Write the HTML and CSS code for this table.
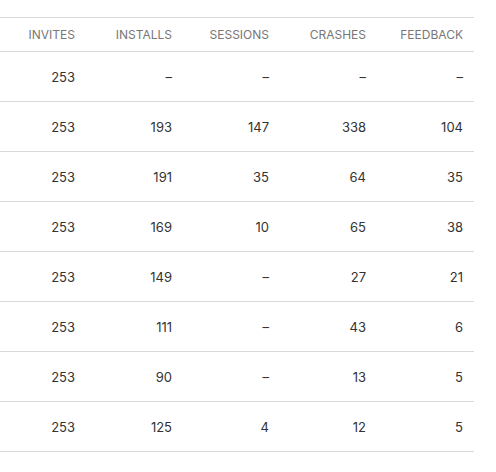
FILE: index.html
```html
<!DOCTYPE html>
<html>
<head>
<meta charset="utf-8">
<link rel="stylesheet" href="styles.css">
</head>
<body>
<div class="wrap">
<table class="stats">
<thead>
<tr><th class="c1">Invites</th><th>Installs</th><th>Sessions</th><th>Crashes</th><th>Feedback</th></tr>
</thead>
<tbody>
<tr><td>253</td><td>–</td><td>–</td><td>–</td><td>–</td></tr>
<tr><td>253</td><td>193</td><td>147</td><td>338</td><td>104</td></tr>
<tr><td>253</td><td>191</td><td>35</td><td>64</td><td>35</td></tr>
<tr><td>253</td><td>169</td><td>10</td><td>65</td><td>38</td></tr>
<tr><td>253</td><td>149</td><td>–</td><td>27</td><td>21</td></tr>
<tr><td>253</td><td>111</td><td>–</td><td>43</td><td>6</td></tr>
<tr><td>253</td><td>90</td><td>–</td><td>13</td><td>5</td></tr>
<tr><td>253</td><td>125</td><td>4</td><td>12</td><td>5</td></tr>
</tbody>
</table>
</div>
</body>
</html>
```
FILE: styles.css
```css
html, body {
  margin: 0;
  padding: 0;
  background: #ffffff;
}
.wrap {
  padding-top: 17px;
  width: 474px;
}
.stats {
  width: 474px;
  border-collapse: collapse;
  table-layout: fixed;
  font-family: Inter, Roboto, "Liberation Sans", sans-serif;
}
.stats th, .stats td {
  text-align: right;
  padding: 0 11px 0 0;
  width: 97px;
  box-sizing: border-box;
}
.stats th.c1 {
  width: 86px;
}
.stats thead tr {
  border-top: 1px solid #d9d9d9;
  border-bottom: 1px solid #d9d9d9;
}
.stats th {
  height: 34px;
  font-size: 12px;
  font-weight: 400;
  color: #777777;
  text-transform: uppercase;
  letter-spacing: 0;
}
.stats tbody tr {
  border-bottom: 1px solid #d9d9d9;
}
.stats td {
  height: 50px;
  padding-top: 1px;
  font-size: 13px;
  color: #333333;
}
```
